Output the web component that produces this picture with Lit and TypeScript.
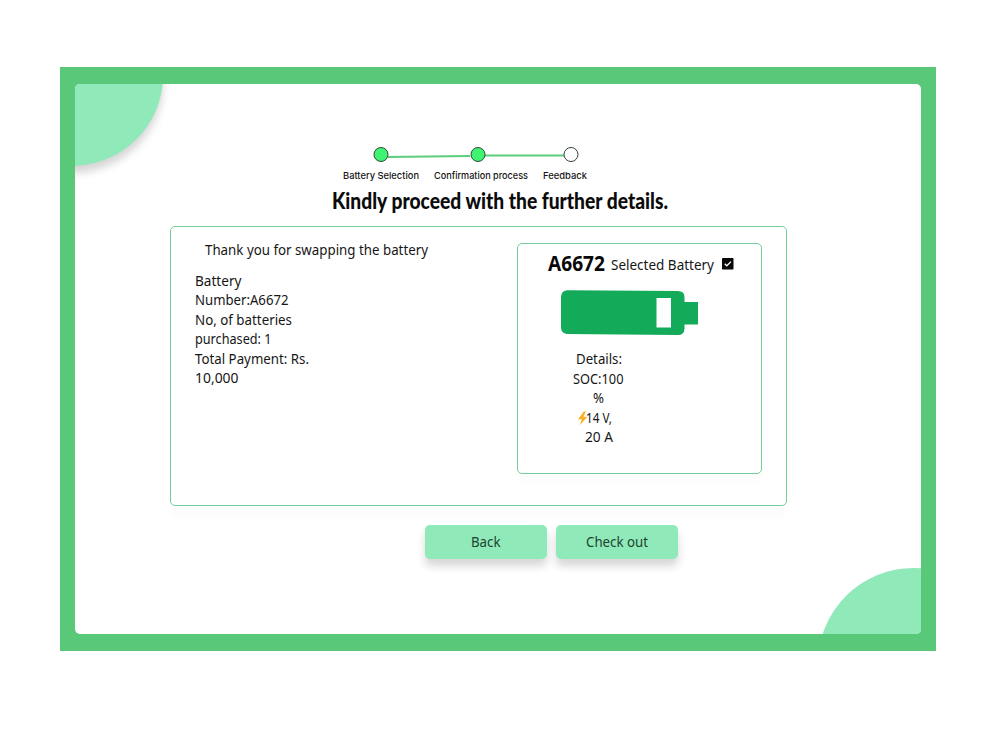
import { LitElement, html, css, svg } from "lit";
import { customElement, property } from "lit/decorators.js";

/** One line of text whose advance is fitted to an exact width. */
@customElement("fit-text")
class FitText extends LitElement {
  @property() text = "";
  @property({ type: Number }) width = 100;
  @property({ type: Number }) height = 19.5;
  @property({ type: Number }) baseline = 14.5;
  static styles = css`
    :host { display: block; flex: none; }
    svg { display: block; overflow: visible; }
    text { fill: currentColor; }
  `;
  render() {
    return html`<svg width=${this.width} height=${this.height}>
      <text x="0" y=${this.baseline} textLength=${this.width} lengthAdjust="spacingAndGlyphs">${this.text}</text>
    </svg>`;
  }
}

const line = (text: string, width: number, height = 19.5, baseline = 14) =>
  html`<fit-text .text=${text} .width=${width} .height=${height} .baseline=${baseline}></fit-text>`;

@customElement("app-root")
class AppRoot extends LitElement {
  static styles = css`
    * { box-sizing: border-box; }
    :host {
      display: block; width: 1000px; height: 750px; padding: 67px 0 0 60px;
      box-sizing: border-box; background: #fff; overflow: hidden;
      font-family: "Noto Sans", "Open Sans", sans-serif; font-size: 15.3px; color: #161616;
    }
    .frame { width: 876px; height: 584px; padding: 17px 15px; background: #59c878; }
    .page {
      position: relative; width: 846px; height: 550px; border-radius: 5px;
      background: #fff; overflow: hidden; padding-top: 61px;
    }
    .blob { position: absolute; border-radius: 50%; background: #90e9b9; }
    .tl { left: -95px; top: -99px; width: 183px; height: 181px; box-shadow: 0 7px 8px rgba(0,0,0,.17); }
    .br { left: 742.5px; top: 483.5px; width: 191px; height: 191px; }
    .stepper { display: block; margin-left: 285px; width: 230px; height: 21px; }
    .labels {
      display: flex; gap: 15px; margin-left: 267.5px; height: 20px;
      font-family: Inter, sans-serif; font-weight: 500; font-size: 9.6px;
    }
    .title { margin-left: 257px; height: 40px; font-family: Lato, sans-serif; font-weight: 900; font-size: 22px; color: #0b0b0b; }
    .card {
      display: flex; margin-left: 95px; width: 617px; height: 280px;
      border: 1px solid #72cf9b; border-radius: 5px; box-shadow: 0 11px 10px rgba(0,0,0,.014);
    }
    .summary { width: 346px; padding: 14px 0 0 24px; }
    .thanks { padding-left: 10px; height: 30.5px; }
    .battery {
      width: 245px; height: 231px; margin-top: 16px;
      border: 1px solid #72cf9b; border-radius: 5px; box-shadow: 0 8px 8px rgba(0,0,0,.014);
    }
    .head { display: flex; padding: 10.5px 0 0 30px; height: 46px; }
    .id { width: 63px; font-family: "Open Sans", sans-serif; font-weight: 700; font-size: 21px; color: #080808; }
    .check { display: block; margin: 3px 0 0 8px; }
    .cell { display: block; margin-left: 42px; }
    .details { display: flex; flex-direction: column; align-items: center; width: 161px; padding-top: 14px; }
    .volts { display: flex; margin-left: -7px; }
    .buttons { display: flex; gap: 9px; padding: 18.5px 0 0 350px; }
    button {
      display: flex; justify-content: center; width: 122px; height: 34px; padding: 8px 0 0;
      border: 0; border-radius: 5px; background: #90e9b9; color: #1c4430;
      font: inherit; box-shadow: 0 7px 8px rgba(0,0,0,.16);
    }
  `;

  render() {
    return html`<main class="frame"><div class="page">
      <div class="blob tl"></div>
      <div class="blob br"></div>
      <svg class="stepper" viewBox="0 0 230 21">
        <path d="M28 12L110 11M125 10.5H204" stroke="#5bcd7c" stroke-width="1.8" fill="none"/>
        ${[21, 118, 211].map((x, i) => svg`<circle cx=${x} cy="9.5" r="7" fill=${i < 2 ? "#3ef471" : "#fff"} stroke="#35443a" stroke-width="1"/>`)}
      </svg>
      <div class="labels">
        ${line("Battery Selection", 76, 18, 13)}
        ${line("Confirmation process", 94, 18, 13)}
        ${line("Feedback", 44, 18, 13)}
      </div>
      <div class="title">${line("Kindly proceed with the further details.", 336, 40, 22.5)}</div>
      <section class="card">
        <div class="summary">
          <div class="thanks">${line("Thank you for swapping the battery", 223)}</div>
          ${line("Battery", 46.5)}
          ${line("Number:A6672", 93.5)}
          ${line("No, of batteries", 97)}
          ${line("purchased: 1", 76.5)}
          ${line("Total Payment: Rs.", 114)}
          ${line("10,000", 43.5)}
        </div>
        <div class="battery">
          <div class="head">
            <div class="id">${line("A6672", 57, 20, 16)}</div>
            ${line("Selected Battery", 103, 20, 14.5)}
            <svg class="check" width="12" height="12" viewBox="0 0 12 12">
              <rect width="11.5" height="11.5" rx=".7" fill="#080808"/>
              <path d="M2.7 5.7L4.8 7.8L9 3.6" fill="none" stroke="#fff" stroke-width="1.3"/>
            </svg>
          </div>
          <svg class="cell" width="139" height="46" viewBox="0 0 139 46">
            <path fill="#13aa59" fill-rule="evenodd" d="M7 .2L118 1Q124.5 1.2 124.5 7V12H138V34.5H124.5V39Q124 45 118 45L7 44Q1 43 1 37.5V7Q1 1 7 .2ZM96.5 8V37.5H111V8Z"/>
          </svg>
          <div class="details">
            ${line("Details:", 46)}
            ${line("SOC:100", 50.5)}
            ${line("%", 11)}
            <div class="volts">
              <svg width="8" height="19.5" viewBox="0 0 8 19.5" overflow="visible">
                <path fill="#fbb024" d="M5.8 2.5L0 10.2H3.8L1.8 16.2L9.4 7.8H5.4L8 2.5Z"/>
              </svg>
              ${line("14 V,", 26)}
            </div>
            ${line("20 A", 28)}
          </div>
        </div>
      </section>
      <div class="buttons">
        <button>${line("Back", 29.5)}</button>
        <button>${line("Check out", 62)}</button>
      </div>
    </div></main>`;
  }
}
